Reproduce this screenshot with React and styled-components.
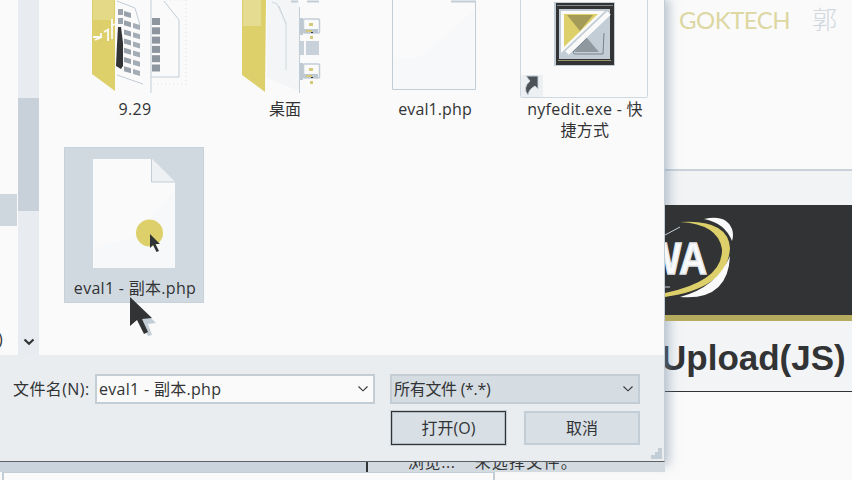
import React from 'react';
import styled, { createGlobalStyle, css } from 'styled-components';

const Global = createGlobalStyle`
  * { box-sizing: border-box; }
  body { margin: 0; background: #fafafa; overflow: hidden; }
`;

const ui = css`
  font-family: "Open Sans", "Noto Sans CJK SC", sans-serif;
  font-size: 16px;
  line-height: 22px;
  color: #323335;
  white-space: nowrap;
`;

const Screen = styled.main`
  position: relative;
  width: 852px;
  height: 480px;
  overflow: hidden;
  background: #fafafa;
`;

const Page = styled.section`
  display: flex;
  flex-direction: column;
  height: 480px;
  padding-left: 665px;
`;

const Watermark = styled.header`
  display: flex;
  gap: 22px;
  height: 169px;
  padding: 1px 0 0 14px;
  font: 400 24px/37px "Lato", "Noto Sans CJK SC", sans-serif;
  color: #ddd7a2;
  white-space: nowrap;
`;
const Brand = styled.span`
  width: 111px;
  letter-spacing: -0.5px;
`;
const Surname = styled.span`
  font-family: "Noto Sans CJK SC", sans-serif;
  font-size: 25px;
  font-weight: 300;
  line-height: 34px;
  color: #d0d7dd;
`;

const Strip = styled.div`
  height: 36px;
  background: #f1f3f5;
  border-top: 2px solid #c9d2da;
`;
const Banner = styled.div`
  position: relative;
  z-index: 1;
  height: 116px;
  overflow: hidden;
  background: #323335;
  border-bottom: 6px solid #b5ab5e;
`;
const Heading = styled.h1`
  margin: 0 0 0 -4px;
  height: 71px;
  padding-top: 17px;
  border-bottom: 1px solid #323335;
  background: #f2f4f6;
  font: 700 35px/40px "Liberation Sans", sans-serif;
  color: #323335;
`;

const BehindBar = styled.div`
  position: absolute;
  z-index: 1;
  left: 0;
  top: 462px;
  width: 665px;
  height: 18px;
  overflow: hidden;
  display: grid;
  grid-template-columns: 368px 297px;
  grid-template-rows: 10px 8px;
`;
const BehindAddress = styled.div`
  background: #cbd4dc;
  border-right: 2px solid #323335;
`;
const BehindUpload = styled.div`
  ${ui}
  display: flex;
  gap: 19px;
  padding-left: 40px;
  background: #d3dbe1;
`;
const BehindText = styled.span`
  margin-top: -11px;
  height: 22px;
  letter-spacing: ${(p) => p.$track}px;
`;
const BehindField = styled.div`
  grid-column: 1 / -1;
  margin-left: 2px;
  width: 493px;
  height: 8px;
  background: #fafafa;
  border: 2px solid #c3cdd6;
  border-top: 1px solid #c3cdd6;
  border-bottom: 0;
`;

const Dialog = styled.section`
  position: absolute;
  left: 0;
  top: 0;
  width: 665px;
  height: 462px;
  display: flex;
  flex-direction: column;
  background: #fafafa;
  border-right: 1px solid #c3cdd6;
  border-bottom: 1px solid #5d6165;
  box-shadow: 2px 1px 10px 2px rgba(120, 142, 163, 0.5);
`;
const Browser = styled.div`
  display: flex;
  height: 355px;
`;
const Tree = styled.aside`
  ${ui}
  display: flex;
  flex-direction: column;
  justify-content: space-between;
  width: 18px;
  padding-top: 194px;
`;
const TreeSelection = styled.div`
  width: 17px;
  height: 32px;
  background: #cfd7de;
`;
const TreeText = styled.span`
  height: 27px;
  margin-left: -2px;
`;
const Scrollbar = styled.div`
  display: flex;
  flex-direction: column;
  justify-content: space-between;
  align-items: center;
  width: 21px;
  padding: 98px 0 9px;
  background: #e8ecf0;
`;
const Thumb = styled.div`
  width: 21px;
  height: 113px;
  background: #c8d1d9;
`;
const Chevron = styled.svg`
  display: block;
  width: 12px;
  height: 8px;
  flex: none;
  fill: none;
  stroke: #323335;
  stroke-width: ${(p) => (p.$bold ? 2.2 : 1.1)};
`;

const Files = styled.div`
  display: grid;
  grid-template-columns: repeat(4, 140px);
  grid-template-rows: 147px 156px;
  column-gap: 10px;
  padding-left: 25px;
`;
const File = styled.figure`
  ${ui}
  margin: 0;
  display: flex;
  flex-direction: column;
  align-items: center;
  background: ${(p) => (p.$selected ? '#d1d9e0' : 'transparent')};
  box-shadow: ${(p) => (p.$selected ? 'inset 0 0 0 1px #c8d1d9' : 'none')};
`;
const Art = styled.svg`
  display: block;
  width: 140px;
  height: ${(p) => p.$h || 99}px;
  flex: none;
`;
const Name = styled.figcaption`
  padding-left: 2px;
  text-align: center;
  line-height: 21px;
  letter-spacing: ${(p) => p.$track || 0}px;
`;

const Footer = styled.footer`
  display: grid;
  grid-template-columns: 83px 280px 250px;
  grid-template-rows: 30px 34px;
  row-gap: 7px;
  height: 106px;
  padding: 19px 0 0 12px;
  background: #e9edf0;
`;
const Label = styled.label`
  ${ui}
  line-height: 31px;
  padding-left: 1px;
  letter-spacing: 0.4px;
`;
const Field = styled.div`
  ${ui}
  display: flex;
  align-items: center;
  justify-content: space-between;
  height: 30px;
  padding: 0 4px 1px 2px;
  background: #fafafa;
  border: 2px solid #c3cdd6;
  letter-spacing: 0.3px;
`;
const FilterSelect = styled(Field)`
  margin-left: 15px;
  width: 250px;
  background: #d5dce2;
  letter-spacing: -0.3px;
`;
const Actions = styled.div`
  grid-column: 3;
  display: grid;
  width: 249px;
  margin-left: 16px;
  grid-template-columns: 115px 116px;
  justify-content: space-between;
`;
const Button = styled.button`
  ${ui}
  height: 34px;
  padding: 0 0 1px 0;
  background: #d8dfe5;
  border: ${(p) => (p.$primary ? '1px solid #323335' : '2px solid #c3cdd6')};
  box-shadow: ${(p) => (p.$primary ? '0 0 0 1px #c3cdd6, inset 0 0 0 1px #b4bdc5' : 'none')};
  border-radius: 0;
`;
const Grip = styled.svg`
  position: absolute;
  right: 2px;
  bottom: 2px;
  width: 11px;
  height: 11px;
  fill: #c3cdd6;
`;
const Pointer = styled.svg`
  position: absolute;
  left: 128px;
  top: 295px;
  width: 28px;
  height: 42px;
`;
const Logo = styled.svg`
  display: block;
  width: 187px;
  height: 110px;
`;

const Down = ({ bold }) => (
  <Chevron viewBox="0 0 12 8" $bold={bold}><path d="M1.500 1.500 6 5.800l4.500-4.300" /></Chevron>
);

const rows = [0, 1, 2, 3, 4, 5, 6];

const Folder929 = () => (
  <Art viewBox="-1 0 140 99">
    <path d="M50-5h48l15 22v61H87V93L51 76z" fill="#fafafa" />
    <path d="M99 1 114 20v57H86M86 93V0M52 1l18 7 5 17M52 75l26 9" fill="none" stroke="#c3cdd6" />
    <path d="M101 0h20v84H88" fill="none" stroke="#dce2e7" strokeDasharray="1 3" />
    {rows.map((i) => (
      <g key={i}>
        {i < 2 && <rect x="53" y={9 + i * 9} width="5" height="6" fill="#9ba4ad" />}
        <path d={`M59 ${11 + i * 9.200}l7 2v5l-7-2z`} fill="#98a1aa" />
        {i < 6 && <path d={`M68 ${23 + i * 9.200}l7 2v5l-7-2z`} fill="#a4adb5" />}
        {i < 6 && <rect x="87" y={18 + i * 9.300} width="8" height="7" fill="#8d969e" />}
      </g>
    ))}
    <path d="M27 0h23v91L27 74z" fill="#ddd06a" />
    <path d="M28 0h21v20H28z" fill="#e3d986" />
    <path d="M28 37h8v-4M30 40l7-3M43 29v12M47 19v20M39 32l5-3M46 26l4-2" fill="none" stroke="#fafafa" strokeWidth="1.800" />
    <path d="M53 27h3l2 16v23l-2 3-5-3 1-22z" fill="#323335" />
  </Art>
);

const FolderDesktop = () => (
  <Art viewBox="-1 0 140 99">
    <path d="M52-5h32v96L52 78z" fill="#f3f5f6" />
    <path d="M57 2l5 2 9 19v47M64 6l7 18" fill="none" stroke="#d0d8df" />
    <path d="M84.500 7v86" fill="none" stroke="#c3cdd6" />
    <path d="M76 1.500h7M92 1.500h12" stroke="#c3cdd6" strokeWidth="2" />
    {[18, 63].map((y) => (
      <g key={y}>
        <rect x="88.500" y={y + 1} width="16" height="14" rx="1" fill="#fafafa" stroke="#c3cdd6" strokeWidth="1.500" />
        <path d={`M85 ${y}h3v17h-3zM88 ${y + 11}h15v4H88z`} fill="#bdc8d0" />
        <path d={`M94 ${y + 5}h4v3h-4zM91 ${y + 12}h6v2h-6zM95 ${y + 18}h3v3h-3z`} fill="#d3c978" />
        <path d={`M96 ${y + 14}h2v1h-2z`} fill="#323335" />
      </g>
    ))}
    <path d="M85 41h4v14h-4zM91 41h13v14H91z" fill="#c8d1d9" />
    <path d="M27 0h24l-1 92-23-17z" fill="#ddd06a" />
    <path d="M28 0h18v26H28z" fill="#e5dc91" />
  </Art>
);

const BlankPhp = () => (
  <Art viewBox="-2 0 140 99">
    <path d="M26.500-2v91.500h83V1.500H85" fill="#fafafa" stroke="#c3cdd6" />
    <path d="M109 10v79H27V59l28-2z" fill="#f7f8f9" />
    <path d="M85 1.500h25" stroke="#c3cdd6" strokeWidth="2" />
  </Art>
);

const NyfEdit = () => (
  <Art viewBox="-2 0 140 99">
    <rect x="4.500" y="-4" width="127" height="101.500" fill="none" stroke="#d0d8df" rx="1" />
    <rect x="38" y="2" width="61" height="64" fill="#c3cdd6" />
    <path d="M40 3h58v62H40z" fill="#323335" />
    <path d="M41 5.500h56" stroke="#85898c" strokeWidth="1" />
    <path d="M43 9h51v50H43z" fill="#c3cdd6" />
    <path d="M45 11h44L45 53z" fill="#fafafa" />
    <path d="M48 14h34L48 47z" fill="#ddd06a" />
    <path d="M51 15h26L64 31z" fill="#a49b59" />
    <path d="M93 13 51 53" stroke="#fafafa" strokeWidth="5" />
    <path d="m71 38-14 14q0 2 2 2h28l1-21" fill="none" stroke="#7b838a" strokeWidth="1" />
    <path d="m71 38-13 14h25z" fill="#8f989f" />
    <path d="M42 60.500h53" stroke="#9b976f" strokeWidth="1" />
    <rect x="5" y="75" width="22" height="22" fill="#edf0f3" />
    <path d="M10 76h12v13l-3-3q-6 3-7 9-6-7 2-14z" fill="#4c5258" stroke="#c3cdd6" />
  </Art>
);

const SelectedPhp = () => (
  <Art viewBox="0 0 140 131" $h={131}>
    <path d="M29 12h59l23 23v86H29z" fill="#fafafa" />
    <path d="M111 43v78H30V99l40-8z" fill="#f7f8f9" />
    <path d="M87.500 12v23H111" fill="#eef1f3" stroke="#c3cdd6" />
    <circle cx="85.500" cy="86" r="13.500" fill="#ddd06a" />
    <path d="M86 87v14l3-3 3.500 7 2.500-1-3.500-7h4.500z" fill="#323335" />
  </Art>
);

export default function App() {
  return (
    <>
      <Global />
      <Screen>
        <Page>
          <Watermark><Brand>GOKTECH</Brand><Surname>郭</Surname></Watermark>
          <Strip />
          <Banner>
            <Logo viewBox="0 0 187 110">
              <path d="M39 14q22-5 28 10 2 6 0 12Q60 18 39 14z" fill="#fafafa" />
              <path d="M15 17q48-3 50 26Q63 83 0 92v-4q58-12 57-44Q53 19 15 17z" fill="#ddd06a" />
              <path d="M65 51Q63 96 15 92 52 82 65 51z" fill="#fafafa" />
              <path d="M0 30 15 22M0 82h5" stroke="#c3cdd6" />
              <text x="-20" y="68.500" fill="#fafafa" stroke="#e3e8ec" strokeWidth="1.600" fontFamily="Liberation Sans" fontWeight="700" fontSize="44" textLength="62" lengthAdjust="spacingAndGlyphs">WA</text>
            </Logo>
          </Banner>
          <Heading>Upload(JS)</Heading>
        </Page>
        <Dialog>
          <Browser>
            <Tree><TreeSelection /><TreeText>)</TreeText></Tree>
            <Scrollbar><Thumb /><Down bold /></Scrollbar>
            <Files>
              <File><Folder929 /><Name $track={0.3}>9.29</Name></File>
              <File><FolderDesktop /><Name>桌面</Name></File>
              <File><BlankPhp /><Name $track={0.1}>eval1.php</Name></File>
              <File><NyfEdit /><Name $track={0.25}>nyfedit.exe - 快<br />捷方式</Name></File>
              <File $selected><SelectedPhp /><Name $track={0.3}>eval1 - 副本.php</Name></File>
            </Files>
          </Browser>
          <Footer>
            <Label>文件名(N):</Label>
            <Field><span>eval1 - 副本.php</span><Down /></Field>
            <FilterSelect><span>所有文件 (*.*)</span><Down /></FilterSelect>
            <Actions>
              <Button $primary>打开(O)</Button>
              <Button>取消</Button>
            </Actions>
          </Footer>
          <Grip viewBox="0 0 11 11"><path d="M7 0h4v11H0V7h4V4h3z" /></Grip>
          <Pointer viewBox="0 0 28 42">
            <path d="m5 5 23 23-8 1 4 11-4 1-7-12z" fill="#c3cdd6" />
            <path d="M2 2v29l7-6 7 14 4-2-6-13 10-1z" fill="#323335" />
          </Pointer>
        </Dialog>
        <BehindBar>
          <BehindAddress />
          <BehindUpload>
            <BehindText $track={0.6}>浏览...</BehindText>
            <BehindText $track={1.2}>未选择文件。</BehindText>
          </BehindUpload>
          <BehindField />
        </BehindBar>
      </Screen>
    </>
  );
}
